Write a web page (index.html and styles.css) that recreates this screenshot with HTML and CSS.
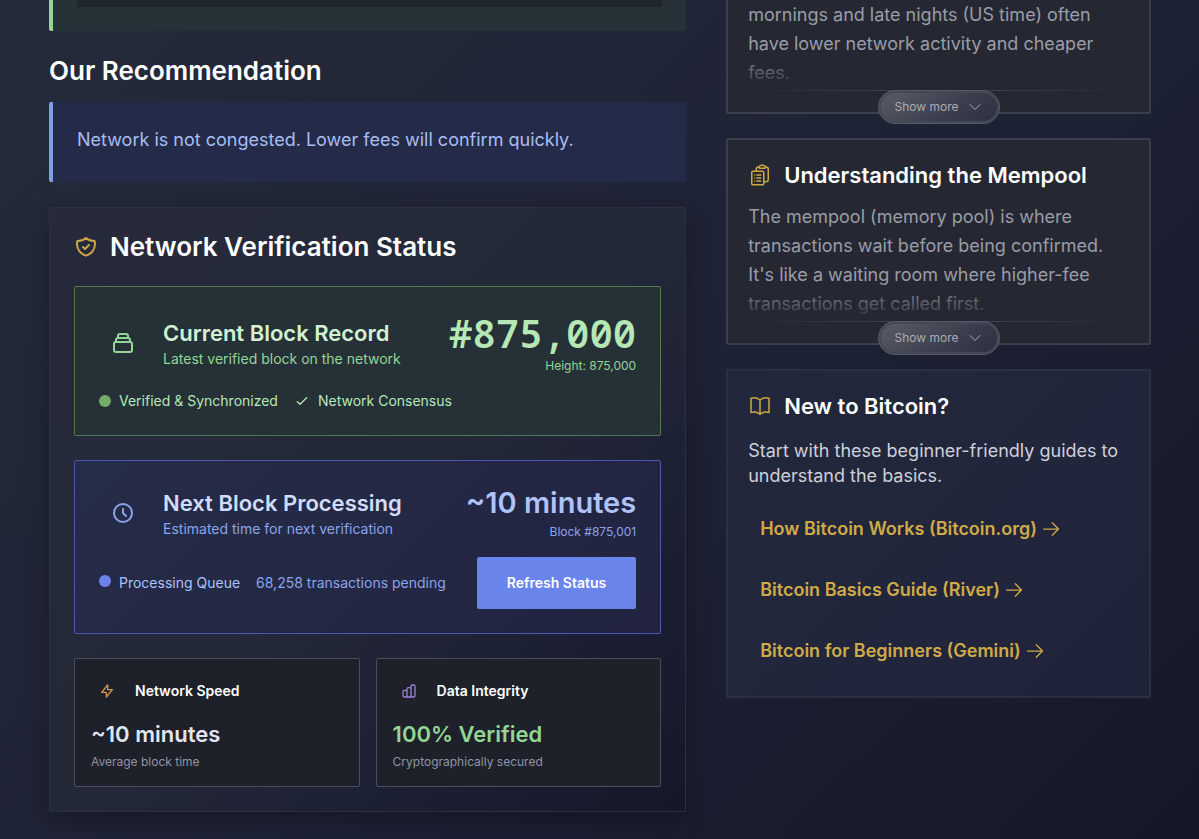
FILE: index.html
```
<!DOCTYPE html>
<html lang="en">
<head>
<meta charset="utf-8">
<meta name="viewport" content="width=device-width, initial-scale=1">
<title>Network Verification Status</title>
<link rel="stylesheet" href="styles.css">
</head>
<body>
<main class="page">
  <div class="main-col">
    <section class="fee-panel"><div class="fee-inner"></div></section>
    <h2 class="section-title">Our Recommendation</h2>
    <p class="recommendation">Network is not congested. Lower fees will confirm quickly.</p>

    <section class="verify">
      <h2 class="verify-title">
        <svg class="icon bold gold" viewBox="0 0 24 24"><path d="M9 12l2 2 4-4m5.618-4.016A11.955 11.955 0 0112 2.944a11.955 11.955 0 01-8.618 3.04A12.02 12.02 0 003 9c0 5.591 3.824 10.29 9 11.622 5.176-1.332 9-6.03 9-11.622 0-1.042-.133-2.052-.382-3.016z"/></svg>
        Network Verification Status
      </h2>

      <article class="block current">
        <div class="block-head">
          <span class="icon-box"><svg class="icon bold" viewBox="0 0 24 24"><path d="M19 11H5m14 0a2 2 0 012 2v6a2 2 0 01-2 2H5a2 2 0 01-2-2v-6a2 2 0 012-2m14 0V9a2 2 0 00-2-2M5 11V9a2 2 0 012-2m0 0V5a2 2 0 012-2h6a2 2 0 012 2v2M7 7h10"/></svg></span>
          <div class="block-name">
            <h3>Current Block Record</h3>
            <p>Latest verified block on the network</p>
          </div>
          <div class="block-figure">
            <div class="height">#875,000</div>
            <p>Height: 875,000</p>
          </div>
        </div>
        <div class="block-foot">
          <span class="state"><i class="dot"></i>Verified &amp; Synchronized</span>
          <span class="state"><svg class="icon small bold" viewBox="0 0 24 24"><path d="M5 13l4 4L19 7"/></svg>Network Consensus</span>
        </div>
      </article>

      <article class="block next">
        <div class="block-head">
          <span class="icon-box"><svg class="icon bold" viewBox="0 0 24 24"><path d="M12 8v4l3 3m6-3a9 9 0 11-18 0 9 9 0 0118 0z"/></svg></span>
          <div class="block-name">
            <h3>Next Block Processing</h3>
            <p>Estimated time for next verification</p>
          </div>
          <div class="block-figure">
            <div class="eta">~10 minutes</div>
            <p>Block #875,001</p>
          </div>
        </div>
        <div class="block-foot">
          <span class="state"><i class="dot"></i>Processing Queue</span>
          <span class="pending">68,258 transactions pending</span>
          <button class="refresh" type="button">Refresh Status</button>
        </div>
      </article>

      <div class="metrics">
        <article class="metric">
          <h4><span class="metric-icon orange"><svg class="icon small bold" viewBox="0 0 24 24"><path d="M13 10V3L4 14h7v7l9-11h-7z"/></svg></span>Network Speed</h4>
          <div class="metric-value">~10 minutes</div>
          <p>Average block time</p>
        </article>
        <article class="metric">
          <h4><span class="metric-icon purple"><svg class="icon small bold" viewBox="0 0 24 24"><path d="M9 19v-6a2 2 0 00-2-2H5a2 2 0 00-2 2v6a2 2 0 002 2h2a2 2 0 002-2zm0 0V9a2 2 0 012-2h2a2 2 0 012 2v10m-6 0a2 2 0 002 2h2a2 2 0 002-2m0 0V5a2 2 0 012-2h2a2 2 0 012 2v14a2 2 0 01-2 2h-2a2 2 0 01-2-2z"/></svg></span>Data Integrity</h4>
          <div class="metric-value good">100% Verified</div>
          <p>Cryptographically secured</p>
        </article>
      </div>
    </section>
  </div>

  <aside class="side-col">
    <article class="info cut">
      <div class="clip"><p>mornings and late nights (US time) often have lower network activity and cheaper fees.</p></div>
      <button class="more" type="button">Show more <svg class="chevron" viewBox="0 0 24 24"><path d="m19.5 8.25-7.5 7.5-7.5-7.5"/></svg></button>
    </article>

    <article class="info">
      <h3 class="info-title"><svg class="icon gold" viewBox="0 0 24 24"><path d="M9 12h3.75M9 15h3.75M9 18h3.75m3 .75H18a2.25 2.25 0 0 0 2.25-2.25V6.108c0-1.135-.845-2.098-1.976-2.192a48.424 48.424 0 0 0-1.123-.08m-5.801 0c-.065.21-.1.433-.1.664 0 .414.336.75.75.75h4.5a.75.75 0 0 0 .75-.75 2.25 2.25 0 0 0-.1-.664m-5.8 0A2.251 2.251 0 0 1 13.5 2.25H15c1.012 0 1.867.668 2.15 1.586m-5.8 0c-.376.023-.75.05-1.124.08C9.095 4.01 8.25 4.973 8.25 6.108V8.25m0 0H4.875c-.621 0-1.125.504-1.125 1.125v11.25c0 .621.504 1.125 1.125 1.125h9.75c.621 0 1.125-.504 1.125-1.125V9.375c0-.621-.504-1.125-1.125-1.125H8.25ZM6.75 12h.008v.008H6.75V12Zm0 3h.008v.008H6.75V15Zm0 3h.008v.008H6.75V18Z"/></svg>Understanding the Mempool</h3>
      <div class="clip"><p>The mempool (memory pool) is where transactions wait before being confirmed. It's like a waiting room where higher-fee transactions get called first.</p></div>
      <button class="more" type="button">Show more <svg class="chevron" viewBox="0 0 24 24"><path d="m19.5 8.25-7.5 7.5-7.5-7.5"/></svg></button>
    </article>

    <article class="info starter">
      <h3 class="info-title"><svg class="icon gold" viewBox="0 0 24 24"><path d="M12 6.042A8.967 8.967 0 0 0 6 3.75c-1.052 0-2.062.18-3 .512v14.25A8.987 8.987 0 0 1 6 18c2.305 0 4.408.867 6 2.292m0-14.25a8.966 8.966 0 0 1 6-2.292c1.052 0 2.062.18 3 .512v14.25A8.987 8.987 0 0 0 18 18a8.967 8.967 0 0 0-6 2.292m0-14.25v14.25"/></svg>New to Bitcoin?</h3>
      <p class="lead">Start with these beginner-friendly guides to understand the basics.</p>
      <nav class="guides">
        <a href="#bitcoin-org">How Bitcoin Works (Bitcoin.org)<svg class="arrow" viewBox="0 0 24 24"><path d="M13.5 4.5 21 12m0 0-7.5 7.5M21 12H3"/></svg></a>
        <a href="#river">Bitcoin Basics Guide (River)<svg class="arrow" viewBox="0 0 24 24"><path d="M13.5 4.5 21 12m0 0-7.5 7.5M21 12H3"/></svg></a>
        <a href="#gemini">Bitcoin for Beginners (Gemini)<svg class="arrow" viewBox="0 0 24 24"><path d="M13.5 4.5 21 12m0 0-7.5 7.5M21 12H3"/></svg></a>
      </nav>
    </article>
  </aside>
</main>
</body>
</html>
```
FILE: styles.css
```
* { box-sizing: border-box; }
body {
  margin: 0;
  min-height: 100vh;
  font-family: Inter, "Liberation Sans", sans-serif;
  color: #fff;
  background: linear-gradient(135deg, #262b3b 0%, #1d2134 58%, #151827 100%);
}
h2, h3, h4, p { margin: 0; }
h2, h3, h4 { font-weight: 600; }
.page {
  display: grid;
  grid-template-columns: 3fr 2fr;
  gap: 40px;
  align-items: start;
  padding: 0 48px 27px 49px;
}
.icon { width: 24px; height: 24px; flex: none; }
.icon, .chevron, .arrow {
  fill: none;
  stroke: currentColor;
  stroke-width: 1.5;
  stroke-linecap: round;
  stroke-linejoin: round;
}
.bold { stroke-width: 2; }
.small { width: 16px; height: 16px; }
.gold { color: #cfa843; }

.fee-panel {
  padding: 0 24px 24px;
  border-left: 4px solid #93d694;
  border-radius: 0 0 2px 2px;
  background: #273138;
}
.fee-inner { height: 7px; background: #1e252c; border-radius: 0 0 2px 2px; }
.section-title { margin: 24px 0 15px; font-size: 26px; line-height: 32px; }
.recommendation {
  padding: 23px 24px 28px;
  border-left: 4px solid #809ee8;
  border-radius: 2px;
  background: #242b49;
  color: #a8bdf2;
  font-size: 18px;
  line-height: 29px;
}

.verify {
  display: grid;
  gap: 24px;
  margin-top: 25px;
  padding: 24px;
  border: 1px solid #2c3040;
  border-radius: 2px;
  background: linear-gradient(135deg, #262a3b 0%, #242938 50%, #1b1e33 80%, #161828 100%);
  box-shadow: 0 8px 24px rgba(0, 0, 0, 0.3);
}
.verify-title {
  display: flex;
  align-items: center;
  gap: 12px;
  font-size: 26px;
  line-height: 30px;
}
.block { padding: 24px; border: 1px solid; border-radius: 2px; }
.current { border-color: #507a55; background: #263037; color: #94d696; }
.next {
  border-color: #4856b4;
  background: linear-gradient(135deg, #262d49, #21233f);
  color: #8ba4ea;
}
.block-head { display: flex; align-items: center; gap: 16px; }
.icon-box { display: grid; place-items: center; width: 48px; height: 48px; }
.block-name h3 { font-size: 22px; line-height: 32px; }
.block-name p { font-size: 14px; line-height: 20px; }
.current h3 { color: #d2f1d3; }
.next h3 { color: #d0dcfa; }
.block-figure { margin-left: auto; text-align: right; }
.block-figure p { margin-top: 2px; font-size: 12px; line-height: 18px; }
.height {
  color: #b5e8b5;
  font-family: "Noto Sans Mono", "DejaVu Sans Mono", monospace;
  font-size: 39px;
  font-weight: 600;
  line-height: 44px;
}
.eta { color: #adc3fa; font-size: 29px; font-weight: 600; line-height: 36px; }
.block-foot {
  display: flex;
  align-items: center;
  gap: 16px;
  margin-top: 16px;
  font-size: 14px;
  line-height: 20px;
}
.state { display: flex; align-items: center; gap: 8px; }
.current .state { color: #b5e8b5; }
.next .state { color: #adc3fa; }
.dot { width: 12px; height: 12px; border-radius: 50%; background: #74ad66; }
.next .dot { background: #6d83ec; margin-bottom: 4px; }
.refresh {
  margin-left: auto;
  padding: 16px 30px;
  border: 0;
  border-radius: 2px;
  background: #6985ec;
  color: #fff;
  font: 600 14px/20px Inter, "Liberation Sans", sans-serif;
}
.metrics { display: grid; grid-template-columns: 1fr 1fr; gap: 16px; }
.metric {
  padding: 16px 16px 15px;
  border: 1px solid #4b4d5b;
  border-radius: 2px;
  background: #1e202a;
  color: #9095a3;
}
.metric h4 {
  display: flex;
  align-items: center;
  gap: 12px;
  margin-bottom: 12px;
  color: #fff;
  font-size: 14px;
  line-height: 20px;
}
.metric-icon { display: grid; place-items: center; width: 32px; height: 32px; }
.orange { color: #d9954b; }
.purple { color: #9c7fd6; }
.metric-value { margin-bottom: 4px; color: #e2e5f0; font-size: 22px; font-weight: 600; line-height: 30px; }
.good { color: #93d694; }
.metric p { font-size: 12px; line-height: 18px; }

.side-col { display: grid; gap: 24px; }
.info {
  position: relative;
  padding: 20px;
  border: 2px solid #3b3e4b;
  border-radius: 2px;
  background: #252833;
}
.cut { padding-top: 0; border-top: 0; border-radius: 0 0 2px 2px; }
.starter { padding-bottom: 21px; border-color: #2b2f40; background: linear-gradient(135deg, #22283c, #20243b); }
.info-title {
  display: flex;
  align-items: center;
  gap: 12px;
  font-size: 22px;
  line-height: 30px;
}
.clip {
  position: relative;
  margin-bottom: 1px;
  padding-bottom: 4px;
  color: #9a9ca7;
  font-size: 18px;
  line-height: 29px;
}
.info-title + .clip { margin-top: 12px; }
.clip::before {
  content: "";
  position: absolute;
  inset: auto 0 0;
  height: 40px;
  background: linear-gradient(rgba(37, 40, 51, 0), #252833);
}
.clip::after {
  content: "";
  position: absolute;
  inset: auto 0 0;
  height: 1px;
  background: linear-gradient(90deg, transparent, #474a57 50%, transparent);
}
.more {
  position: absolute;
  left: 50%;
  bottom: -12px;
  transform: translateX(-50%);
  display: flex;
  align-items: center;
  gap: 8px;
  height: 34px;
  padding: 0 16px;
  border: 1px solid #565966;
  border-radius: 17px;
  background: linear-gradient(145deg, #5b5e69, #3b3e4c 60%, #2b2e3f);
  box-shadow: inset 0 0 0 2px #444754;
  color: #a9acb7;
  font: 400 12px/18px Inter, "Liberation Sans", sans-serif;
  white-space: nowrap;
}
.chevron { width: 16px; height: 16px; }
.lead { margin: 17px 0 16px; color: #cdd0da; font-size: 18px; line-height: 25px; }
.guides { display: grid; gap: 12px; }
.guides a {
  display: flex;
  align-items: center;
  gap: 4px;
  padding: 12px;
  color: #d0aa47;
  font-size: 18px;
  font-weight: 600;
  line-height: 25px;
  text-decoration: none;
}
.arrow { width: 20px; height: 20px; stroke-width: 1.5; }
```
